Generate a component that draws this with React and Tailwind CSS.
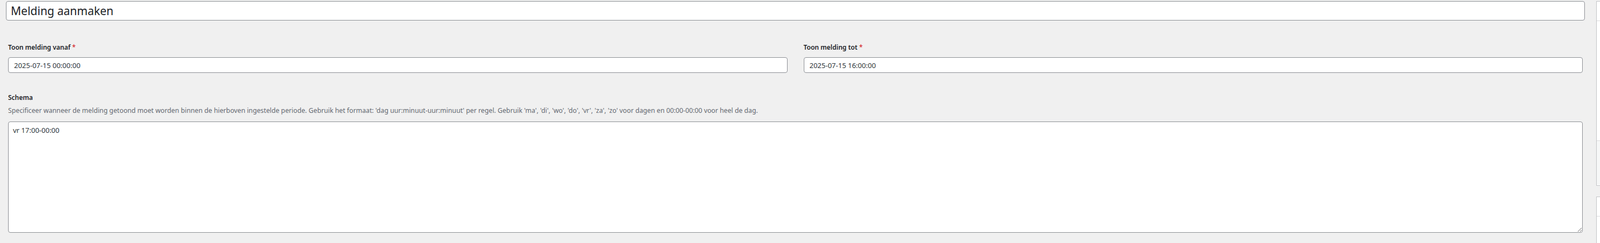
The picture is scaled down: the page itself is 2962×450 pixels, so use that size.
export default function App() {
  return (
    <div className="flex h-[450px] w-[2962px] overflow-hidden bg-[#f0f0f0] font-['Noto_Sans',sans-serif] text-[#1d2327]">
      <div className="min-w-0 flex-1 pl-[11px] pr-[21px] pt-[2px]">
        <input
          type="text"
          defaultValue="Melding aanmaken"
          className="block h-[36px] w-full rounded-[4px] border border-[#8c8f94] bg-white px-[8px] text-[21px] leading-none text-[#1d2327] outline-none"
        />

        <div className="px-[4px] pt-[42px]">
          <div className="grid grid-cols-2 gap-[30px]">
            <div>
              <label className="block text-[12px] font-semibold leading-[16px]">
                Toon melding vanaf <span className="text-[#d63638]">*</span>
              </label>
              <input
                type="text"
                defaultValue="2025-07-15 00:00:00"
                className="mt-[10px] block h-[29px] w-full rounded-[4px] border border-[#8c8f94] bg-white px-[10px] text-[13px] text-[#2c3338] outline-none"
              />
            </div>
            <div>
              <label className="block text-[12px] font-semibold leading-[16px]">
                Toon melding tot <span className="text-[#d63638]">*</span>
              </label>
              <input
                type="text"
                defaultValue="2025-07-15 16:00:00"
                className="mt-[10px] block h-[29px] w-full rounded-[4px] border border-[#8c8f94] bg-white px-[10px] text-[13px] text-[#2c3338] outline-none"
              />
            </div>
          </div>

          <label className="mt-[38px] block text-[12px] font-semibold leading-[16px]">Schema</label>
          <p className="mt-[8px] text-[12.25px] leading-[16px] text-[#646970]">
            Specificeer wanneer de melding getoond moet worden binnen de hierboven ingestelde periode. Gebruik het
            formaat: 'dag uur:minuut-uur:minuut' per regel. Gebruik 'ma', 'di', 'wo', 'do', 'vr', 'za', 'zo' voor
            dagen en 00:00-00:00 voor heel de dag.
          </p>
          <textarea
            defaultValue="vr 17:00-00:00"
            className="mt-[12px] block h-[206px] w-full rounded-[4px] border border-[#8c8f94] bg-white px-[8px] py-[6px] text-[13px] leading-[18px] text-[#2c3338] outline-none"
          />
        </div>
      </div>

      {/* sidebar, mostly cut off */}
      <aside className="w-[7px] shrink-0">
        <div className="mt-[2px] h-[342px] border-y border-l border-[#c3c4c7] bg-white">
          <div className="h-[36px] border-b border-[#dcdcde]" />
          <div className="h-[221px]" />
          <div className="h-[82px] border-t border-[#dcdcde] bg-[#f6f7f7]" />
        </div>
        <div className="mt-[20px] h-[100px] border-t border-l border-[#c3c4c7] bg-white">
          <div className="h-[36px] border-b border-[#dcdcde]" />
        </div>
      </aside>
    </div>
  )
}
